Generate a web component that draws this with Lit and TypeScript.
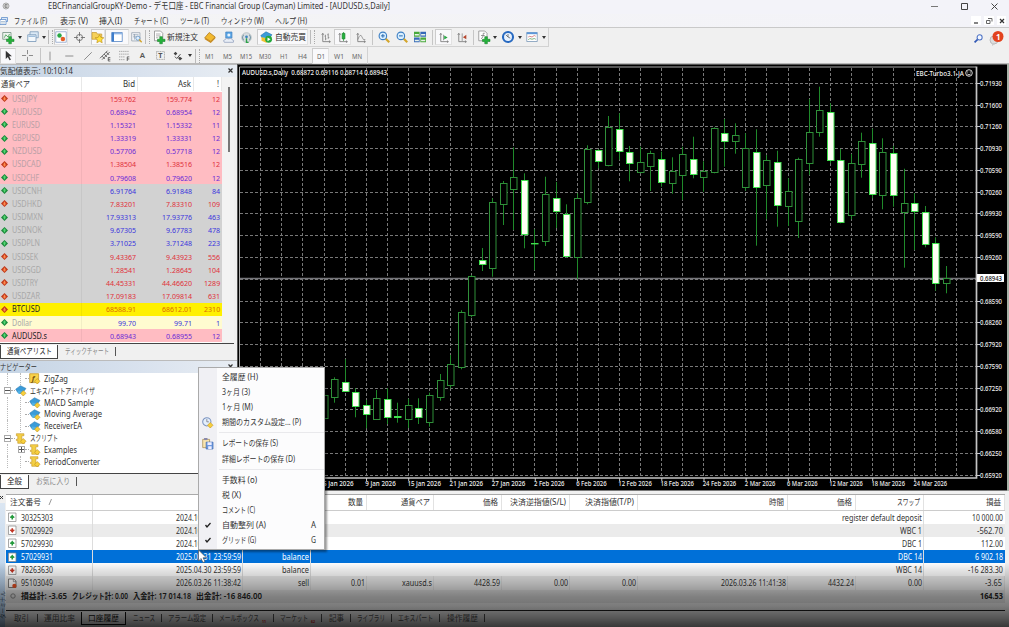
import { LitElement, html, svg, css } from "lit";
import { customElement } from "lit/decorators.js";

/** One run of text, fitted to the column width it is given. */
const t = (s: string, w: number, size = 8.2, weight = 400) => html`<svg class="t" width=${w} height="12" viewBox="0 0 ${w} 12">
  <text x="0" y="9" font-size=${size} font-weight=${weight} textLength=${w} lengthAdjust="spacingAndGlyphs">${s}</text></svg>`;

const shared = css`
  * { box-sizing: border-box; }
  :host { display: block; font-family: "Noto Sans", "Noto Sans CJK JP", sans-serif; color: #333; }
  svg { display: block; flex: none; overflow: visible; }
  .t { fill: currentColor; }
  .row { display: flex; align-items: center; }
`;

const plus = svg`<path d="M9 7.500h3.500V11H16v3h-3.500v3H9v-3H6v-3h3z" fill="#25b13b" stroke="#0d7a20" stroke-width=".7"/>`;
const axes = svg`<path d="M4 2v12h11M2.500 4l1.500-2 1.500 2M13 12.500l2 1.500-2 1.500" fill="none" stroke="#777" stroke-width="1.200"/>`;
const lens = svg`<path d="M10 10l5 5" stroke="#d3a52c" stroke-width="2.800"/><circle cx="6.500" cy="6.500" r="5" fill="#d9efff" stroke="#3c7fc4" stroke-width="1.500"/>`;
const cap = svg`<path d="M1 6l7-5 8 4-4 5-8 1z" fill="#3a9bd8" stroke="#1c6ba6" stroke-width=".7"/><path d="M4 8l8 1v4H5z" fill="#4fb1e6"/>`;
const scroll = svg`<path d="M2 1h11v3H10v7h4v4H4v-4H2V9h2V4H2z" fill="#f3cf45" stroke="#c0901d" stroke-width=".8"/>`;
const gold = svg`<path d="M12 8l4 4-4 4-4-4z" fill="#f7cf3c" stroke="#b98a15" stroke-width=".8"/>`;

const ICONS: Record<string, unknown> = {
  newChart: svg`<path d="M1 2h11v9H1z" fill="#eef4ee" stroke="#6a8a78"/><path d="M3 9l2-4 3 3 2-4" fill="none" stroke="#3a9a4a"/>${plus}`,
  profiles: svg`<path d="M4 1h11v8H4z" fill="#dbe9f5" stroke="#7796b5"/><path d="M1 5h11v9H1z" fill="#f3f8fc" stroke="#6d90b3"/><path d="M2 7h9" stroke="#8cb2d6" stroke-width="1.500"/>`,
  market: svg`<path d="M1 1h14v14H1z" fill="#fff" stroke="#9aaed0" stroke-width="1.200"/><circle cx="6" cy="6" r="3" fill="#2aa844"/><circle cx="10.500" cy="10.500" r="3" fill="#e45d25"/>`,
  target: svg`<circle cx="8" cy="8" r="4.500" fill="none" stroke="#666" stroke-width="1.200"/><path d="M8 0v6M8 10v6M0 8h6M10 8h6" stroke="#666" stroke-width="1.200"/>`,
  folderStar: svg`<path d="M0 2h6l1 2h6v7H0z" fill="#f6d15a" stroke="#c79b35"/><path d="M10 5l1.800 3.500 4 .5-3 2.700.8 4-3.600-2-3.500 2 .7-4-3-2.700 4-.5z" fill="#ffe03a" stroke="#b88a17" stroke-width=".8"/>`,
  terminal: svg`<path d="M1 2h14v12H1z" fill="#fff" stroke="#4c7fc0"/><path d="M1 2h3v12H1z" fill="#3f7dcb"/><path d="M4 3.500h11" stroke="#8fb6e6" stroke-width="2"/>`,
  tester: svg`<path d="M1 1h12v12H1z" fill="#f4f6f8" stroke="#8a97a8"/><path d="M3 4h8M3 7h5M5 3v8" stroke="#89a" /><circle cx="10" cy="9" r="3" fill="#dff0ff" stroke="#4c7fb5"/><path d="M12 11l3.500 4" stroke="#d3a52c" stroke-width="2"/>`,
  order: svg`<path d="M2 0h8l3 3v10H2z" fill="#fff" stroke="#888"/><path d="M4 4h6M4 6.500h6M4 9h3" stroke="#999"/>${plus}`,
  book: svg`<path d="M1 9l6-7 8 6-6 6z" fill="#f2b92e" stroke="#a9741a"/><path d="M1 9l8 5v2L1 11zM9 14l6-6v2l-6 6z" fill="#c98b1f"/>`,
  cloud: svg`<path d="M4 0h9v9H4z" fill="#5ba6e6" stroke="#3d7fbd"/><circle cx="8.500" cy="4.500" r="2.200" fill="#e9f5ff"/><path d="M2 15q-3-3 1-4 2-3 5-1 4-2 5 1 4 1 2 4z" fill="#e9eef6" stroke="#8797b8"/>`,
  radar: svg`<circle cx="8" cy="8" r="7" fill="#d8dde0" stroke="#aab3b8"/><path d="M4 4a6 6 0 0 0 0 8M12 4a6 6 0 0 1 0 8" fill="none" stroke="#7b9aa8" stroke-width="1.500"/><circle cx="8" cy="7" r="2" fill="#3b84bd"/><path d="M8 9v6h3" stroke="#2da148" stroke-width="2" fill="none"/>`,
  auto: svg`${cap}<path d="M2 8l7 2v6l-7-3z" fill="#f2c232"/><circle cx="11.500" cy="11" r="4.600" fill="#25a93c"/><path d="M10 8.500l4 2.500-4 2.500z" fill="#fff"/>`,
  bars: svg`${axes}<path d="M8 4v8M8 6H6.500M8 10h1.500M12 2v8M12 4h-1.500M12 8h1.500" stroke="#777" fill="none"/>`,
  candle: svg`${axes}<path d="M9.500 0v13" stroke="#16862b"/><path d="M7.500 2h4v8h-4z" fill="#24b23e" stroke="#16862b"/>`,
  line: svg`${axes}<path d="M4 11q4-10 6-4t5 4" stroke="#777" fill="none"/>`,
  zin: svg`${lens}<path d="M4 6.500h5M6.500 4v5" stroke="#2769ae" stroke-width="1.300"/>`,
  zout: svg`${lens}<path d="M4 6.500h5" stroke="#2769ae" stroke-width="1.300"/>`,
  tiles: svg`<path d="M0 1h7.500v6.500H0zM8.500 8.500H16V15H8.500z" fill="#48a83a"/><path d="M8.500 1H16v6.500H8.500zM0 8.500h7.500V15H0z" fill="#3568b8"/><path d="M1 4h5.500v2H1zM9.500 4H15v2H9.500zM1 11.500h5.500v2H1zM9.500 11.500H15v2H9.500z" fill="#e8f2e8"/>`,
  shift: svg`${axes}<path d="M8 4v8" stroke="#777"/><path d="M9 5l5 3-5 3z" fill="#2aa844"/>`,
  shiftEnd: svg`${axes}<path d="M9 2v11" stroke="#777"/><path d="M15 4l-5 3.500 5 3z" fill="#b5452c"/>`,
  indic: svg`<path d="M1 0h8l3 3v10H1z" fill="#fff" stroke="#888"/><path d="M4 10q3 0 3-7h2M4 6h5" stroke="#777" fill="none"/>${plus}`,
  clock: svg`<circle cx="8" cy="8" r="6.700" fill="#e7f2ff" stroke="#2769c0" stroke-width="2.800"/><path d="M8 4v4l3 1.500M5 5l3 3" stroke="#555" fill="none"/>`,
  template: svg`<path d="M1 2h14v12H1z" fill="#fff" stroke="#7393b4"/><path d="M1 3h14" stroke="#5d97d8" stroke-width="2.500"/><path d="M3 8l2-1 3 1 3-2 2 1" stroke="#c66" fill="none"/><path d="M3 12l2-2 3 1 3-1 2 1" stroke="#595" fill="none"/>`,
  cursor: svg`<path d="M4 1v12l3-3 2.500 5 2-1-2.500-5h4z" fill="#333"/>`,
  cross: svg`<path d="M8 0v6M8 10v6M0 8h6M10 8h6" stroke="#777" stroke-width="1.200"/>`,
  vline: svg`<path d="M8 1v14" stroke="#777" stroke-width="1.200"/>`,
  hline: svg`<path d="M2 8h13" stroke="#777" stroke-width="1.300"/>`,
  diag: svg`<path d="M2 14L14 2" stroke="#777" stroke-width="1.300"/>`,
  channel: svg`<path d="M0 12L11 1M3 14L14 3M3 9l4 4M6 6l4 4M9 3l4 4" stroke="#555" stroke-width="1.300"/><path d="M15 11h-3v5h3M12 13.500h3" stroke="#333" fill="none"/>`,
  fibo: svg`<path d="M0 2h15M0 6h15M0 10h9M0 14h9" stroke="#888" stroke-dasharray="2 1"/><path d="M15 10h-3v6M12 13h3" stroke="#333" fill="none"/>`,
  a: svg`<text x="3" y="13" font-size="14" font-weight="600" fill="#555">A</text>`,
  tt: svg`<path d="M1 1h14v14H1z" fill="none" stroke="#777" stroke-dasharray="2 1"/><text x="4" y="13" font-size="13" font-weight="700" fill="#555">T</text>`,
  shapes: svg`<path d="M1 4l3-3 3 3-3 3zM8 11l3-2 4 3-4 3z" fill="#444"/><path d="M3 9l3 3 6-7" stroke="#444" fill="none" stroke-width="1.500"/>`,
  up: svg`<path d="M8 0l8 8-8 8-8-8z" fill="#1c8a3c"/><path d="M8 3l4 5H9.500v4h-3V8H4z" fill="#53d873"/>`,
  down: svg`<path d="M8 0l8 8-8 8-8-8z" fill="#c0391c"/><path d="M8 13l4-5H9.500V4h-3v4H4z" fill="#ff8a4c"/>`,
  docUp: svg`<path d="M1 0h14v16H1z" fill="#fff" stroke="#888" stroke-width="1.400"/><path d="M8 3l4 5H9.500v4h-3V8H4z" fill="#239a3c"/><path d="M4 8h8" stroke="#239a3c" stroke-width="2.500"/>`,
  docDown: svg`<path d="M1 0h14v16H1z" fill="#fff" stroke="#888" stroke-width="1.400"/><path d="M8 13l4-5H9.500V4h-3v4H4z" fill="#c03322"/><path d="M4 8h8" stroke="#c03322" stroke-width="2.500"/>`,
  docSell: svg`<path d="M1 0h10l4 4v12H1z" fill="#fff" stroke="#555" stroke-width="1.400"/><path d="M10 0v5h5" fill="none" stroke="#555"/><circle cx="12" cy="13" r="4" fill="#e44f22"/>`,
  func: svg`<path d="M1 1h13v13H1z" fill="#f9d24a" stroke="#b98c20"/><text x="4" y="11" font-size="11" font-style="italic" font-weight="700" fill="#765310">f</text>${gold}`,
  expert: svg`${cap}${gold}`,
  script: svg`${scroll}${gold}`,
  period: svg`<circle cx="7" cy="7" r="6" fill="#e3eefb" stroke="#7b93c0" stroke-width="1.500"/><path d="M7 3v4h3" stroke="#667" fill="none"/>${gold}`,
  save: svg`<path d="M1 2h10v12H1z" fill="#f8e5b0" stroke="#a58747"/><path d="M3 0h5v3H3z" fill="#88a"/><path d="M6 6h10v10H6z" fill="#6f9be0" stroke="#3f69b0"/><path d="M8 6h6v4H8zM9 12h5v4H9z" fill="#eef"/>`,
  app: svg`<circle cx="8" cy="8" r="6" fill="#ddd" stroke="#aaa" stroke-width="2"/><path d="M11 5H6v6h5M6 8h5" stroke="#777" stroke-width="1.500" fill="none"/>`,
  child: svg`<path d="M3 1h12v8H3z" fill="#dbe9f9" stroke="#5a8ac8" stroke-width="1.500"/><path d="M0 5h12v10H0z" fill="#fff" stroke="#5a8ac8" stroke-width="1.500"/><path d="M2 9h8M2 12h8" stroke="#68a"/>`,
  search: svg`<path d="M1 15l6-6" stroke="#3158b5" stroke-width="3"/><circle cx="10" cy="6" r="4.500" fill="#f4f8ff" stroke="#4a70c4" stroke-width="1.800"/>`,
};
const icon = (n: string, size = 12) => html`<svg width=${size} height=${size} viewBox="0 0 16 16">${ICONS[n]}</svg>`;

@customElement("tool-bars")
class ToolBars extends LitElement {
  static styles = [shared, css`
    .title { height: 14px; background: #f3f3f9; padding: 0 0 2px 2px; }
    .title .name { margin-left: 38px; }
    .win { margin-left: auto; padding-right: 11px; gap: 23px; }
    .menu { height: 14px; background: linear-gradient(90deg, #f4f4f5, #f3f3f8); border-bottom: 1px solid #c9c9c9; }
    .mdi { margin-left: auto; gap: 3px; padding-right: 3px; }
    .mdi svg { background: #fff; }
    .area { height: 36px; background: #f0f0f0; display: flex; border-bottom: 1px solid #b9b9b9; }
    .bar { border: 1px solid #d2d2d2; border-left: 0; border-top: 0; height: 19px; width: 549px; }
    .bar.second { height: 17px; width: 368px; border-bottom: 0; }
    .cell { display: flex; align-items: center; justify-content: center; height: 16px; flex: none; }
    .on { background: #f9f9fb; border: 1px solid #ccc; border-right-color: #e2e2e2; border-bottom-color: #e2e2e2; }
    .sep::before { content: ""; width: 1px; height: 15px; background: #c6c6c6; }
    .grip::before { content: ""; width: 3px; height: 14px; border-left: 1px solid #bbb; border-right: 1px dotted #aaa; }
    .caret::before { content: ""; border: 2.5px solid transparent; border-top: 3px solid #333; border-bottom: 0; }
    .tf { color: #666; }
    .right { margin-left: auto; padding: 3px 5px 0 0; gap: 7px; height: 14px; margin-top: 2px; }
  `];
  cell(w: number, name: string, on = false, size = 12) {
    return html`<span class="cell ${on ? "on" : ""} ${["sep", "grip", "caret"].includes(name) ? name : ""}" style="width:${w}px">${ICONS[name] ? icon(name, size) : ""}</span>`;
  }
  tf(w: number, s: string, tw: number, on = false) {
    return html`<span class="cell tf ${on ? "on" : ""}" style="width:${w}px">${t(s, tw, 7.3)}</span>`;
  }
  render() {
    const c = this.cell.bind(this);
    const menus: [string, number, number][] = [["ファイル (F)", 33, 6], ["表示 (V)", 28, 13], ["挿入(I)", 23, 11], ["チャート (C)", 34, 12], ["ツール (T)", 29, 12], ["ウィンドウ (W)", 43, 12], ["ヘルプ (H)", 32, 11]];
    return html`
      <div class="row title">${icon("app", 8)}<span class="name">${t("EBCFinancialGroupKY-Demo - デモ口座 - EBC Financial Group (Cayman) Limited - [AUDUSD.s,Daily]", 342, 8.7)}</span>
        <span class="row win">
          <svg width="7" height="8"><path d="M0 4.500h7" stroke="#777"/></svg>
          <svg width="7" height="8"><path d="M.5 1.500h6v6h-6z" fill="none" stroke="#444"/></svg>
          <svg width="7" height="8"><path d="M.5 1.500l6 6M6.500 1.500l-6 6" stroke="#444"/></svg>
        </span></div>
      <div class="row menu">${icon("child", 8)}<span class="row">${menus.map(([s, w, m]) => html`<span style="margin-left:${m}px">${t(s, w)}</span>`)}</span>
        <span class="row mdi">
          <svg width="10" height="9"><path d="M3 7h4" stroke="#333" stroke-width="1.200"/></svg>
          <svg width="10" height="9"><path d="M4 2.500h4v3M2.500 4.500h3.500v3h-3.500z" fill="none" stroke="#666"/></svg>
          <svg width="9" height="9"><path d="M3 3l4 4M7 3l-4 4" stroke="#333" stroke-width="1.200"/></svg>
        </span></div>
      <div class="area"><div>
        <div class="row bar">
          ${c(16, "newChart")}${c(8, "caret")}${c(17, "profiles")}${c(6, "caret")}${c(7, "grip")}
          ${c(14, "market", true)}${c(23, "target", false, 11)}${c(14, "folderStar", true, 12)}${c(24, "terminal", true)}${c(14, "tester", false, 11)}${c(9, "grip")}
          ${c(13, "order")}<span class="cell" style="width:34px">${t("新規注文", 31, 8.5)}</span>
          ${c(22, "book")}${c(15, "cloud", false, 11)}${c(21, "radar", false, 11)}
          <span class="cell on" style="width:51px">${icon("auto", 12)}<span style="margin-left:3px">${t("自動売買", 31, 8.5)}</span></span>
          ${c(8, "grip")}${c(18, "bars", false, 11)}${c(17, "candle", true, 11)}${c(19, "line", false, 11)}${c(4, "sep")}
          ${c(19, "zin")}${c(18, "zout")}${c(18, "tiles")}${c(6, "sep")}${c(17, "shift", true, 11)}${c(19, "shiftEnd", false, 11)}${c(5, "sep")}
          ${c(16, "indic")}${c(6, "caret")}${c(19, "clock")}${c(6, "caret")}${c(18, "template")}${c(6, "caret")}
        </div>
        <div class="row bar second">
          ${c(16, "cursor", true, 11)}${c(22, "cross", false, 11)}${c(4, "sep")}${c(16, "vline", false, 10)}${c(21, "hline", false, 10)}${c(17, "diag", false, 10)}
          ${c(18, "channel", false, 11)}${c(20, "fibo", false, 11)}${c(17, "a", false, 9)}${c(18, "tt", false, 9)}${c(18, "shapes", false, 10)}${c(6, "caret")}${c(8, "grip")}
          ${this.tf(16, "M1", 9)}${this.tf(20, "M5", 9)}${this.tf(18, "M15", 12)}${this.tf(20, "M30", 12)}${this.tf(17, "H1", 8)}${this.tf(20, "H4", 9)}${this.tf(17, "D1", 8, true)}${this.tf(19, "W1", 10)}${this.tf(17, "MN", 10)}
        </div></div>
        <span class="row right">${icon("search", 9)}
          <svg width="14" height="13"><circle cx="4" cy="8" r="4" fill="#ddd" stroke="#bbb"/><path d="M2 11l0 3 3-2" fill="#ccc"/><circle cx="8" cy="4.500" r="5.500" fill="#e2431e"/><text x="6" y="7.500" font-size="8" font-weight="700" fill="#fff">1</text></svg>
        </span>
      </div>`;
  }
}

type Quote = [string, number, string, string, string, number, string];
const QUOTES: Quote[] = [
  ["USDJPY", 25, "159.762", "159.774", "12", 0, "p"], ["AUDUSD", 30, "0.68942", "0.68954", "12", 1, "p"], ["EURUSD", 28, "1.15321", "1.15332", "11", 1, "p"],
  ["GBPUSD", 28, "1.33319", "1.33331", "12", 1, "p"], ["NZDUSD", 30, "0.57706", "0.57718", "12", 1, "p"], ["USDCAD", 29, "1.38504", "1.38516", "12", 0, "p"],
  ["USDCHF", 27, "0.79608", "0.79620", "12", 1, "p"], ["USDCNH", 30, "6.91764", "6.91848", "84", 1, "g"], ["USDHKD", 30, "7.83201", "7.83310", "109", 0, "g"],
  ["USDMXN", 31, "17.93313", "17.93776", "463", 1, "g"], ["USDNOK", 30, "9.67305", "9.67783", "478", 1, "g"], ["USDPLN", 28, "3.71025", "3.71248", "223", 1, "g"],
  ["USDSEK", 26, "9.43367", "9.43923", "556", 0, "g"], ["USDSGD", 29, "1.28541", "1.28645", "104", 0, "g"], ["USDTRY", 26, "44.45331", "44.46620", "1289", 0, "g"],
  ["USDZAR", 28, "17.09183", "17.09814", "631", 0, "g"], ["BTCUSD", 28, "68588.91", "68612.01", "2310", 0, "y"], ["Dollar", 20, "99.70", "99.71", "1", 1, "c"],
  ["AUDUSD.s", 35, "0.68943", "0.68955", "12", 1, "p strong"],
];
const numW = (s: string) => s.length * 4.05 - (s.includes(".") ? 2.3 : 0);

@customElement("side-panels")
class SidePanels extends LitElement {
  static styles = [shared, css`
    :host { width: 237px; height: 427px; background: #f0f0f0; }
    .cap { height: 13px; background: linear-gradient(90deg, #c5d4e4, #d9e2ee 60%, #e8edf3); justify-content: space-between; padding: 0 4px 1px 0; border-top: 1px solid #bbb; }
    .list { display: flex; height: 267px; border-bottom: 1px solid #444; width: 234px; }
    .quotes { width: 222px; background: #fff; }
    .q { display: grid; grid-template-columns: 82px 56px 56px 28px; height: 13.18px; }
    .q.head { height: 15px; background: #fff; padding-bottom: 1px; }
    .q > span { display: flex; align-items: center; justify-content: flex-end; padding-right: 2px; }
    .q > span:first-child { justify-content: flex-start; gap: 3.5px; padding-left: 1px; border-right: 1px solid #0000000d; }
    .q.head > span { border-right: 1px solid #e8e8e8; }
    .p { background: #ffbcc2; } .g { background: #d2d2d2; } .y { background: #fff000; } .c { background: #fffbd0; }
    .nm { color: #b9a0a6; } .g .nm, .c .nm { color: #a8a8a8; } .y .nm, .strong .nm { color: #222; }
    .u { color: #3a35dd; } .d { color: #e0303a; } .p .u { color: #6a2bd6; } .y .d { color: #dc6c00; }
    .scroll { width: 12px; background: #f3f3f3; padding: 10px 0 0 6px; }
    .thumb { width: 1.5px; height: 65px; background: #777; }
    .tabs { height: 16px; }
    .tab { height: 14px; display: flex; align-items: center; background: #fff; border: 1px solid #444; border-top: 0; color: #222; justify-content: center; padding-bottom: 1px; }
    .off { color: #888; margin-left: 7px; display: flex; align-items: center; gap: 6px; padding-bottom: 2px; }
    .off::after { content: ""; width: 1px; height: 9px; background: #555; }
    .tree { height: 101px; background: #fff; border-bottom: 1px solid #444; }
    .n { height: 11.85px; }
    .n .box { width: 7px; height: 7px; border: 1px solid #aaa; background: #fff; display: flex; align-items: center; justify-content: center; flex: none; }
    .n .box svg { stroke: #555; }
    .n .lbl { margin-left: 4px; }
    .rail { border-left: 1px dotted #bbb; height: 100%; width: 13px; margin-left: 7px; }
    .rail + .rail { margin-left: 0; width: 5px; }
    .rail + .rail.joint { width: 0; margin-left: -2px; border: 0; }
    .dash { width: 4px; border-top: 1px dotted #aaa; }
  `];
  close() { return html`<svg width="5" height="5"><path d="M.5.5l4 4M4.500.5l-4 4" stroke="#333" stroke-width="1.200"/></svg>`; }
  node(ic: string, s: string, w: number, depth: number, exp = "") {
    const box = exp ? html`<span class="box"><svg width="5" height="5"><path d=${exp === "-" ? "M0 2.5h5" : "M0 2.5h5M2.5 0v5"}/></svg></span>` : html`<span class="dash"></span>`;
    return depth === 0
      ? html`<div class="row n" style="padding-left:4px">${box}<span class="dash"></span>${icon(ic, 11)}<span class="lbl">${t(s, w)}</span></div>`
      : html`<div class="row n"><span class="rail"></span><span class="rail ${exp ? "joint" : ""}"></span>${box}${exp ? html`<span class="dash"></span>` : ""}${icon(ic, 11)}<span class="lbl">${t(s, w)}</span></div>`;
  }
  render() {
    return html`
      <div class="row cap">${t("気配値表示: 10:10:14", 73, 8)}${this.close()}</div>
      <div class="list"><div class="quotes">
        <div class="q head"><span>${t("通貨ペア", 29)}</span><span>${t("Bid", 12)}</span><span>${t("Ask", 13)}</span><span>${t("!", 2)}</span></div>
        ${QUOTES.map(([n, w, b, a, s, up, k]) => html`<div class="q ${k}">
          <span>${icon(up ? "up" : "down", 7)}<span class="nm">${t(n, w)}</span></span>
          ${[b, a, s].map((v) => html`<span class=${up ? "u" : "d"}>${t(v, numW(v), 7.8)}</span>`)}
        </div>`)}
      </div><div class="scroll"><div class="thumb"></div></div></div>
      <div class="row tabs"><span class="tab" style="width:58px">${t("通貨ペアリスト", 45)}</span><span class="off">${t("ティックチャート", 44)}</span></div>
      <div class="row cap">${t("ナビゲーター", 37, 8)}${this.close()}</div>
      <div class="tree">
        ${this.node("func", "ZigZag", 24, 1)}${this.node("expert", "エキスパートアドバイザ", 65, 0, "-")}
        ${this.node("expert", "MACD Sample", 50, 1)}${this.node("expert", "Moving Average", 58, 1)}${this.node("expert", "ReceiverEA", 38, 1)}
        ${this.node("script", "スクリプト", 28, 0, "-")}${this.node("script", "Examples", 33, 1, "+")}${this.node("script", "PeriodConverter", 56, 1)}
      </div>
      <div class="row tabs"><span class="tab" style="width:29px">${t("全般", 15)}</span><span class="off">${t("お気に入り", 34)}</span></div>`;
  }
}

/** high, body top, body bottom, low, filled; one entry per trading day. */
const CANDLES: number[][] = [
  [390.7, 395, 418.3, 419, 0], [377.3, 379.3, 396.7, 402.7, 0], [359.3, 382, 391.3, 392, 1], [388.3, 392, 405.7, 417.3, 1], [400, 405.3, 413.7, 428.3, 1],
  [390, 398.3, 418.7, 420, 0], [388.3, 399, 416.7, 424, 1], [402.7, 416, 416.6, 422.7, 1], [398.7, 405.3, 418.7, 428, 0], [398.3, 407.7, 416.7, 424, 1],
  [392.7, 395.3, 422.3, 426.7, 0], [374, 380.3, 397.3, 400.7, 0], [355, 364.3, 384.7, 388.3, 0], [310.3, 312.3, 367.3, 369.3, 0], [275, 276.3, 314.7, 317.3, 0],
  [248, 260, 264, 271, 1], [198.3, 202, 267.7, 276.7, 0], [181, 183, 203.7, 225, 0], [147.3, 177, 188.7, 230, 0], [173.3, 180.3, 233.7, 248.3, 1],
  [229.3, 242.5, 243.3, 270, 1], [176.7, 194.3, 241, 246, 0], [182, 198.3, 210.7, 228, 1], [204.3, 214.3, 256.3, 257.7, 1], [193.3, 198, 256.7, 279, 0],
  [145.3, 148.7, 202.3, 204.3, 0], [149.3, 150.3, 161.3, 168.3, 1], [116, 126.7, 165.3, 166.3, 0], [113.3, 128.7, 150.7, 159.7, 1], [146, 152.3, 163.3, 181.3, 1],
  [146.7, 162.3, 171.7, 173.3, 0], [150.7, 153.3, 165.7, 191, 0], [151.7, 159, 181.7, 186.7, 1], [157.3, 171.3, 182.7, 193.7, 0], [146.7, 154.3, 175.3, 200, 0],
  [136.7, 159, 173.7, 178.3, 1], [161.3, 171.3, 177.3, 191.7, 0], [127.3, 128.3, 172.3, 173.3, 0], [119, 132.7, 140.7, 166.7, 1], [123.3, 134.7, 141.3, 153.7, 0],
  [133.3, 147.7, 187.3, 190.7, 0], [129.3, 152.3, 187.3, 245.7, 1], [155, 159.7, 185, 219.3, 0], [150.7, 161.7, 204.7, 226.7, 1], [178.3, 191.3, 206.3, 226, 0],
  [157.7, 159.3, 221.3, 238, 0], [99, 132.3, 163.3, 175, 0], [86.7, 110.3, 132.3, 136.7, 0], [103.3, 111.7, 159.7, 163.3, 1], [149, 159.7, 221.7, 223.3, 1],
  [154, 162.7, 214.7, 219.3, 0], [132.7, 141.3, 163.7, 177.7, 0], [128.7, 142.7, 194, 198.3, 1], [138.3, 152.3, 195.3, 209.3, 0], [146, 153.3, 195.3, 206.7, 1],
  [168.7, 203.3, 211.7, 267.7, 0], [193.3, 203.3, 211.3, 250, 1], [206, 212.3, 244, 247.3, 1], [237.3, 243, 283, 290.7, 1], [266, 278, 282.7, 293.3, 0],
];
const PRICES = ["0.71930", "0.71600", "0.71260", "0.70930", "0.70590", "0.70260", "0.69930", "0.69590", "0.69260", "", "0.68590", "0.68260", "0.67920", "0.67590", "0.67250", "0.66920", "0.66580", "0.66250", "0.65920"];
const DATES = ["5 Jan 2026", "9 Jan 2026", "15 Jan 2026", "21 Jan 2026", "27 Jan 2026", "2 Feb 2026", "6 Feb 2026", "12 Feb 2026", "18 Feb 2026", "24 Feb 2026", "2 Mar 2026", "6 Mar 2026", "12 Mar 2026", "18 Mar 2026", "24 Mar 2026"];

@customElement("price-chart")
class PriceChart extends LitElement {
  static styles = [shared, css`
    text { font-size: 7px; fill: #f2f2f2; font-weight: 500; }
    .grid { stroke: #787878; stroke-width: 1; stroke-dasharray: 3 2; }
    .wick { stroke: #1f8a2a; stroke-width: 1; }
    .body { stroke: #2f9039; stroke-width: 1; fill: #000; }
    .full { fill: #fffff5; stroke: #3fe04c; }
  `];
  render() {
    const step = 10.545, x0 = 471.7;
    const cols = Array.from({ length: 34 }, (_, i) => Math.round(x0 + (i - 10) * step * 2 - 0.5) + 0.5);
    const rows = PRICES.map((_, i) => Math.round(83.3 + i * 21.77 - 0.5) + 0.5);
    return html`<svg width="772" height="427" viewBox="237 64 772 427">
      <rect x="237" y="64" width="772" height="427" fill="#000"/>
      <path d="M237 64.500H1007" stroke="#555"/><path d="M237.500 64V490" stroke="#555"/>
      <path d="M239.500 478V67H976" fill="none" stroke="#aaa"/>
      ${cols.map((x) => svg`<path class="grid" d="M${x} 68V477"/>`)}
      ${rows.map((y) => svg`<path class="grid" d="M240 ${y}H976"/>`)}
      <path d="M240 278.500H976" stroke="#77777c" stroke-width="1.400"/>
      <path d="M976.500 66.500V478H239" fill="none" stroke="#c4c4c4" stroke-width="1.700"/>
      ${CANDLES.map(([h, a, b, l, f], i) => {
        const x = Math.round(x0 + (i - 14) * step - 0.5) + 0.5, top = Math.round(a) + 0.5;
        return svg`<path class="wick" d="M${x} ${h}V${l}"/><rect class="body ${f ? "full" : ""}" x=${x - 3} y=${top} width="6.500" height=${Math.max(0.4, Math.round(b) - Math.round(a))}/>`;
      })}
      ${PRICES.map((p, i) => p ? svg`<path d="M977 ${rows[i]}h3" stroke="#ccc"/><text x="980" y=${rows[i] + 2.5} textLength="22" lengthAdjust="spacingAndGlyphs">${p}</text>` : "")}
      <rect x="977" y="274" width="27" height="8" fill="#fff"/><text x="980" y="280.600" textLength="22" lengthAdjust="spacingAndGlyphs" style="fill:#111">0.68943</text>
      ${DATES.map((d, i) => { const x = x0 + (i * 4 - 14) * step;
        return svg`<path d="M${x + 0.3} 478v3" stroke="#ccc"/><text x=${x - 1} y="485.500" textLength=${d.length === 10 ? 30.5 : 33.5} lengthAdjust="spacingAndGlyphs">${d}</text>`; })}
      <text x="242" y="75" textLength="145" lengthAdjust="spacingAndGlyphs">AUDUSD.s,Daily&#160; 0.68872 0.69116 0.68714 0.68943</text>
      <text x="916" y="75.500" textLength="48" lengthAdjust="spacingAndGlyphs">EBC-Turbo3.1-JA</text>
      <g fill="none" stroke="#eee" stroke-width=".9"><circle cx="969" cy="73" r="3.300"/><path d="M967.300 74q1.700 1.800 3.400 0M967.700 71.500v1M970.300 71.500v1"/></g>
      <path d="M1008 64V491" stroke="#a9b3a9" stroke-width="2"/><path d="M237 490.500H1007" stroke="#777"/>
    </svg>`;
  }
}

type Cell = [string, number] | null;
const ORDERS: { ic: string; k?: string; cells: Cell[] }[] = [
  { ic: "docUp", cells: [["30325303", 32], ["2024.10.15 12:20:31", 65], ["balance", 27], null, null, null, null, null, null, null, ["register default deposit", 80], ["10 000.00", 31]] },
  { ic: "docDown", k: "alt", cells: [["57029929", 32], ["2024.10.31 23:59:59", 65], ["balance", 27], null, null, null, null, null, null, null, ["WBC 1", 22], ["-562.70", 26]] },
  { ic: "docUp", cells: [["57029930", 32], ["2024.10.31 23:59:59", 65], ["balance", 27], null, null, null, null, null, null, null, ["DBC 1", 20], ["112.00", 22]] },
  { ic: "docUp", k: "sel", cells: [["57029931", 32], ["2025.03.31 23:59:59", 65], ["balance", 27], null, null, null, null, null, null, null, ["DBC 14", 24], ["6 902.18", 28]] },
  { ic: "docDown", cells: [["78263630", 32], ["2025.04.30 23:59:59", 65], ["balance", 27], null, null, null, null, null, null, null, ["WBC 14", 26], ["-16 283.30", 35]] },
  { ic: "docSell", k: "alt trade", cells: [["95103049", 32], ["2026.03.26 11:38:42", 65], ["sell", 11], ["0.01", 14], ["xauusd.s", 30], ["4428.59", 26], ["0.00", 14], ["0.00", 14], ["2026.03.26 11:41:38", 65], ["4432.24", 26], ["0.00", 14], ["-3.65", 17]] },
];

@customElement("order-terminal")
class OrderTerminal extends LitElement {
  static styles = [shared, css`
    :host { width: 1009px; height: 136px; background: #f0f0f0; position: relative; overflow: hidden; }
    .wrap { display: flex; height: 136px; }
    .side { width: 6px; background: #f0f0f0; padding-top: 4px; flex: none; }
    .grad { margin-top: 3px; width: 5px; height: 124px; background: linear-gradient(#dbe6f2, #a9c8e8); }
    .main { width: 999px; padding-top: 3px; }
    .g { display: grid; grid-template-columns: 87px 150px 68px 56px 67px 68px 68px 68px 150px 68px 68px 81px; height: 13.1px; background: #fff; }
    .g > span { display: flex; align-items: center; justify-content: flex-end; padding-right: 1.5px; min-width: 0; white-space: nowrap; }
    .g > span:first-child { justify-content: flex-start; padding-left: 2px; gap: 4px; }
    .g > span:last-child { padding-right: 2.5px; }
    .head { height: 17px; border-top: 1px solid #aaa; border-bottom: 1px solid #ccc; }
    .head > span { border-right: 1px solid #e2e2e2; padding: 0 3px 1px 0; }
    .g.head > span:first-child { padding-left: 4px; gap: 8px; }
    .g.head > span:last-child { padding-right: 3px; }
    .alt { background: #ebebeb; }
    .trade > span, .g:not(.head) > span:nth-child(11) { border-right: 1px solid #ddd; }
    .g:not(.head) > span:first-child, .g:not(.head) > span:nth-child(2), .g:not(.head) > span:nth-child(3) { border-right: 1px solid #ddd; }
    .sel { background: #0070d8; color: #fff; }
    .sum { height: 13.4px; background: #dedede; color: #222; padding: 0 2px 0 4px; gap: 5px; }
    .sum .total { margin-left: auto; }
    .gap { height: 8px; border-bottom: 1px solid #222; }
    .tabs { height: 15px; color: #555; }
    .tab { display: flex; align-items: center; justify-content: center; height: 13px; flex: none; }
    .bar { width: 1px; height: 8px; background: #555; flex: none; }
    .active { background: #fff; border: 1px solid #111; border-top: 0; color: #111; }
    .n { color: #d21; align-self: flex-end; margin-left: 2px; }
    .n svg { height: 8px; }
    .shade { position: absolute; left: 0; right: 0; top: 71px; height: 65px; pointer-events: none;
      background: linear-gradient(#0000 0, #0000001c 13%, #00000040 33%, #0000006b 53%, #0000007d 68%, #000000a3 86%, #000000c4 100%); }
  `];
  render() {
    const heads: Cell[] = [["注文番号", 31], null, null, ["数量", 15], ["通貨ペア", 29], ["価格", 15], ["決済逆指値(S/L)", 56], ["決済指値(T/P)", 49], ["時間", 15], ["価格", 15], ["スワップ", 23], ["損益", 15]];
    const tabs: [string, number, number, string?][] = [["取引", 15, 31], ["運用比率", 31, 43], ["口座履歴", 31, 45], ["ニュース", 22, 35], ["アラーム設定", 38, 50], ["メールボックス", 40, 60, "11"], ["マーケット", 28, 47, "62"], ["記事", 15, 28], ["ライブラリ", 28, 40], ["エキスパート", 35, 47], ["操作履歴", 31, 44]];
    return html`<div class="wrap">
      <div class="side"><svg width="5" height="5"><path d="M0 1l3 3M3 1l-3 3" stroke="#333"/></svg><div class="grad"><svg width="5" height="124"><text transform="translate(4.500 116) rotate(-90)" font-size="5.500" fill="#345" textLength="28">ターミナル</text></svg></div></div>
      <div class="main">
        <div class="g head">${heads.map((h, i) => html`<span>${h ? t(h[0], h[1]) : ""}${i === 0 ? html`<svg width="3" height="6"><path d="M0 6l2.500-6" stroke="#999"/></svg>` : ""}</span>`)}</div>
        ${ORDERS.map((o) => html`<div class="g ${o.k ?? ""}">${o.cells.map((c, i) => html`<span>${i === 0 ? icon(o.ic, 8.5) : ""}${c ? t(c[0], c[1], 8) : ""}</span>`)}</div>`)}
        <div class="row sum"><svg width="6" height="6"><circle cx="3" cy="3" r="2.200" fill="none" stroke="#888"/></svg>
          ${t("損益計: -3.65", 46, 8, 600)}${t("クレジット計: 0.00", 56, 8, 600)}${t("入金計: 17 014.18", 58, 8, 600)}${t("出金計: -16 846.00", 66, 8, 600)}
          <span class="total">${t("164.53", 23, 8, 700)}</span></div>
        <div class="gap"></div>
        <div class="row tabs">${tabs.map(([s, w, cw, n], i) => html`<span class="tab ${i === 2 ? "active" : ""}" style="width:${cw}px">${t(s, w)}${n ? html`<span class="n">${t(n, 6, 5, 700)}</span>` : ""}</span>${i === 1 || i === 2 ? "" : html`<span class="bar"></span>`}`)}</div>
      </div></div>
      <div class="shade"></div>`;
  }
}

@customElement("context-menu")
class ContextMenu extends LitElement {
  static styles = [shared, css`
    :host { width: 127px; height: 183px; background: linear-gradient(90deg, #f0f0f4 0 18px, #fcfcfd 18px); border: 1px solid #aaa; box-shadow: 2px 2px 2px #0006; padding-top: 1.5px; color: #333; }
    .i { height: 15.100px; }
    .ic { width: 23px; padding-left: 3px; }
    .key { margin-left: auto; padding-right: 8px; }
    .sep { height: 6px; padding: 2.500px 0 0 20px; }
    .sep::before { content: ""; display: block; height: 1px; background: #e9e9ec; }
  `];
  render() {
    const items: ([string, number, string?, string?] | null)[] = [["全履歴 (H)", 36], ["3ヶ月 (3)", 28], ["1ヶ月 (M)", 31], ["期間のカスタム設定... (P)", 79, "period"], null,
      ["レポートの保存 (S)", 56, "save"], ["詳細レポートの保存 (D)", 73], null, ["手数料 (o)", 35], ["税 (X)", 19], ["コメント (C)", 33], ["自動整列 (A)", 44, "check", "A"], ["グリッド (G)", 34, "check", "G"]];
    const check = () => html`<svg width="11" height="8"><path d="M3.500 4l1.500 2 3.500-4" fill="none" stroke="#222" stroke-width="1.300"/></svg>`;
    return items.map((m) => m ? html`<div class="row i"><span class="ic">${m[2] === "check" ? check() : m[2] ? icon(m[2], 11) : ""}</span>${t(m[0], m[1])}${m[3] ? html`<span class="key">${t(m[3], 5)}</span>` : ""}</div>` : html`<div class="sep"></div>`);
  }
}

@customElement("app-root")
class AppRoot extends LitElement {
  static styles = [shared, css`
    :host { width: 1009px; height: 627px; overflow: hidden; position: relative; background: #f0f0f0; }
    .mid { display: flex; height: 427px; }
    context-menu { position: absolute; left: 198px; top: 367px; }
    .pointer { position: absolute; left: 197px; top: 549px; }
  `];
  render() {
    return html`<tool-bars></tool-bars>
      <div class="mid"><side-panels></side-panels><price-chart></price-chart></div>
      <order-terminal></order-terminal>
      <context-menu></context-menu>
      <svg class="pointer" width="10" height="14"><path d="M1.500 1v11l2.500-2.500 2 4 2-1-2-3.700h3.500z" fill="#fff" stroke="#555" stroke-width=".7"/></svg>`;
  }
}
